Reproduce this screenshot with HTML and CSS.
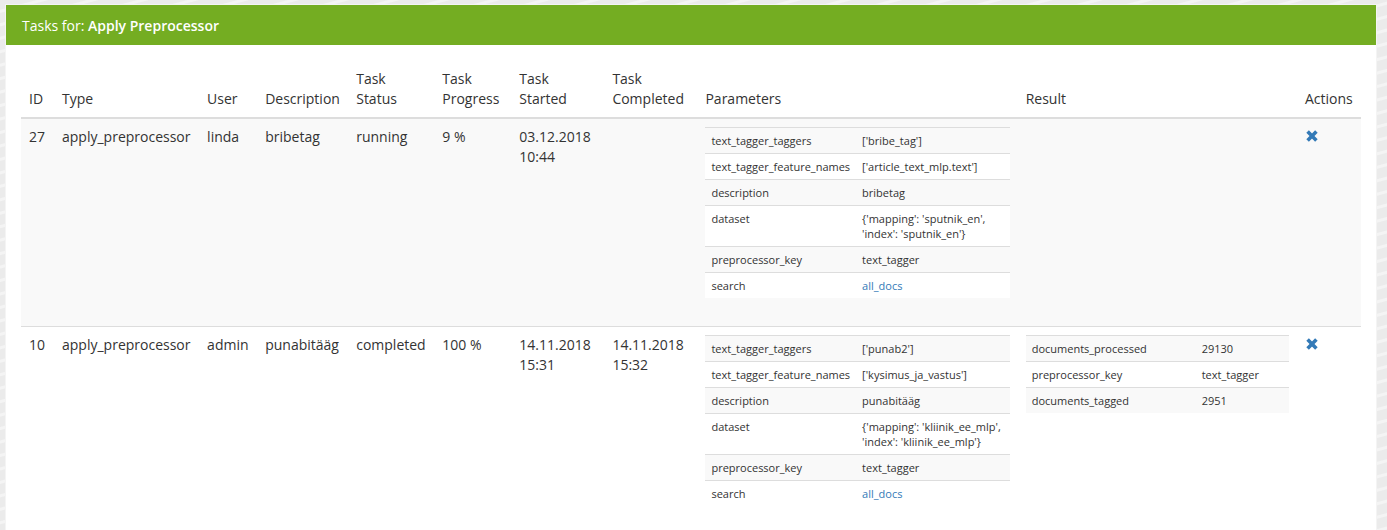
FILE: index.html
```html
<!DOCTYPE html>
<html>
<head>
<meta charset="utf-8">
<link rel="stylesheet" href="styles.css">
</head>
<body>
<div class="panel">
  <div class="panel-heading">Tasks for: <b>Apply Preprocessor</b></div>
  <div class="panel-body">
    <table class="tasks">
      <colgroup>
        <col style="width:33px"><col style="width:145px"><col style="width:58px"><col style="width:91px"><col style="width:86px"><col style="width:77px"><col style="width:93px"><col style="width:93px"><col style="width:320px"><col style="width:279px"><col style="width:64px">
      </colgroup>
      <thead>
        <tr>
          <th>ID</th><th>Type</th><th>User</th><th>Description</th><th>Task<br>Status</th><th>Task<br>Progress</th><th>Task<br>Started</th><th>Task<br>Completed</th><th>Parameters</th><th>Result</th><th>Actions</th>
        </tr>
      </thead>
      <tbody>
        <tr class="odd">
          <td>27</td><td>apply_preprocessor</td><td>linda</td><td>bribetag</td><td>running</td><td>9 %</td><td>03.12.2018<br>10:44</td><td></td>
          <td>
            <table class="sub params">
              <tr><td>text_tagger_taggers</td><td>['bribe_tag']</td></tr>
              <tr><td>text_tagger_feature_names</td><td>['article_text_mlp.text']</td></tr>
              <tr><td>description</td><td>bribetag</td></tr>
              <tr><td>dataset</td><td>{'mapping': 'sputnik_en',<br>'index': 'sputnik_en'}</td></tr>
              <tr><td>preprocessor_key</td><td>text_tagger</td></tr>
              <tr><td>search</td><td><a class="link">all_docs</a></td></tr>
            </table>
          </td>
          <td></td>
          <td><span class="remove"><svg width="12" height="12" viewBox="0 0 12 12"><path d="M1.6 1.6 L10.4 10.4 M10.4 1.6 L1.6 10.4" stroke="#337ab7" stroke-width="3.6"/></svg></span></td>
        </tr>
        <tr>
          <td>10</td><td>apply_preprocessor</td><td>admin</td><td>punabitääg</td><td>completed</td><td>100 %</td><td>14.11.2018<br>15:31</td><td>14.11.2018<br>15:32</td>
          <td>
            <table class="sub params">
              <tr><td>text_tagger_taggers</td><td>['punab2']</td></tr>
              <tr><td>text_tagger_feature_names</td><td>['kysimus_ja_vastus']</td></tr>
              <tr><td>description</td><td>punabitääg</td></tr>
              <tr><td>dataset</td><td>{'mapping': 'kliinik_ee_mlp',<br>'index': 'kliinik_ee_mlp'}</td></tr>
              <tr><td>preprocessor_key</td><td>text_tagger</td></tr>
              <tr><td>search</td><td><a class="link">all_docs</a></td></tr>
            </table>
          </td>
          <td>
            <table class="sub result">
              <tr><td>documents_processed</td><td>29130</td></tr>
              <tr><td>preprocessor_key</td><td>text_tagger</td></tr>
              <tr><td>documents_tagged</td><td>2951</td></tr>
            </table>
          </td>
          <td><span class="remove"><svg width="12" height="12" viewBox="0 0 12 12"><path d="M1.6 1.6 L10.4 10.4 M10.4 1.6 L1.6 10.4" stroke="#337ab7" stroke-width="3.6"/></svg></span></td>
        </tr>
      </tbody>
    </table>
  </div>
</div>
</body>
</html>
```

FILE: styles.css
```css
html, body {
  height: 100%;
}
body {
  margin: 0;
  padding: 4px 10px 0 5px;
  box-sizing: border-box;
  background-color: #ebebeb;
  background-image: repeating-linear-gradient(165deg, #ebebeb 0px, #ebebeb 9px, #f4f4f4 10px, #f4f4f4 12px, #ebebeb 13px);
  font-family: "Open Sans", "Liberation Sans", sans-serif;
  font-size: 14px;
  line-height: 20px;
  color: #333;
  overflow: hidden;
}
.panel {
  background: #fff;
  border: 1px solid #f4f4f4;
  min-height: 700px;
}
.panel-heading {
  background: #74ad22;
  color: #fff;
  padding: 11px 15px 9px 16px;
  height: 20px;
}
.panel-heading b {
  font-weight: 600;
}
.panel-body {
  padding: 16px 15px 15px 15px;
}
.tasks {
  width: 100%;
  border-collapse: collapse;
  border-spacing: 0;
  table-layout: fixed;
}
.tasks > thead > tr > th {
  font-weight: 400;
  text-align: left;
  vertical-align: bottom;
  padding: 8px;
  border-bottom: 2px solid #ddd;
  white-space: nowrap;
}
.tasks > tbody > tr > td {
  padding: 8px;
  vertical-align: top;
  border-top: 1px solid #ddd;
}
.tasks > tbody > tr:first-child > td {
  border-top: 0;
}
.tasks > tbody > tr.odd {
  background: #f9f9f9;
}
.sub {
  width: 100%;
  border-collapse: collapse;
  margin-bottom: 20px;
  font-size: 11px;
  line-height: 15px;
}
.sub td {
  padding: 5px 6px;
  border-top: 1px solid #ddd;
  vertical-align: top;
  white-space: nowrap;
}
.sub tr:nth-child(odd) {
  background: #f9f9f9;
}
.sub tr:nth-child(even) {
  background: #fff;
}
.params td:first-child {
  width: 138px;
}
.result td:first-child {
  width: 158px;
}
.link {
  color: #337ab7;
  text-decoration: none;
}
.remove {
  display: inline-block;
  padding-left: 1px;
  padding-top: 3px;
  line-height: 12px;
}
.remove svg {
  display: block;
}
```
